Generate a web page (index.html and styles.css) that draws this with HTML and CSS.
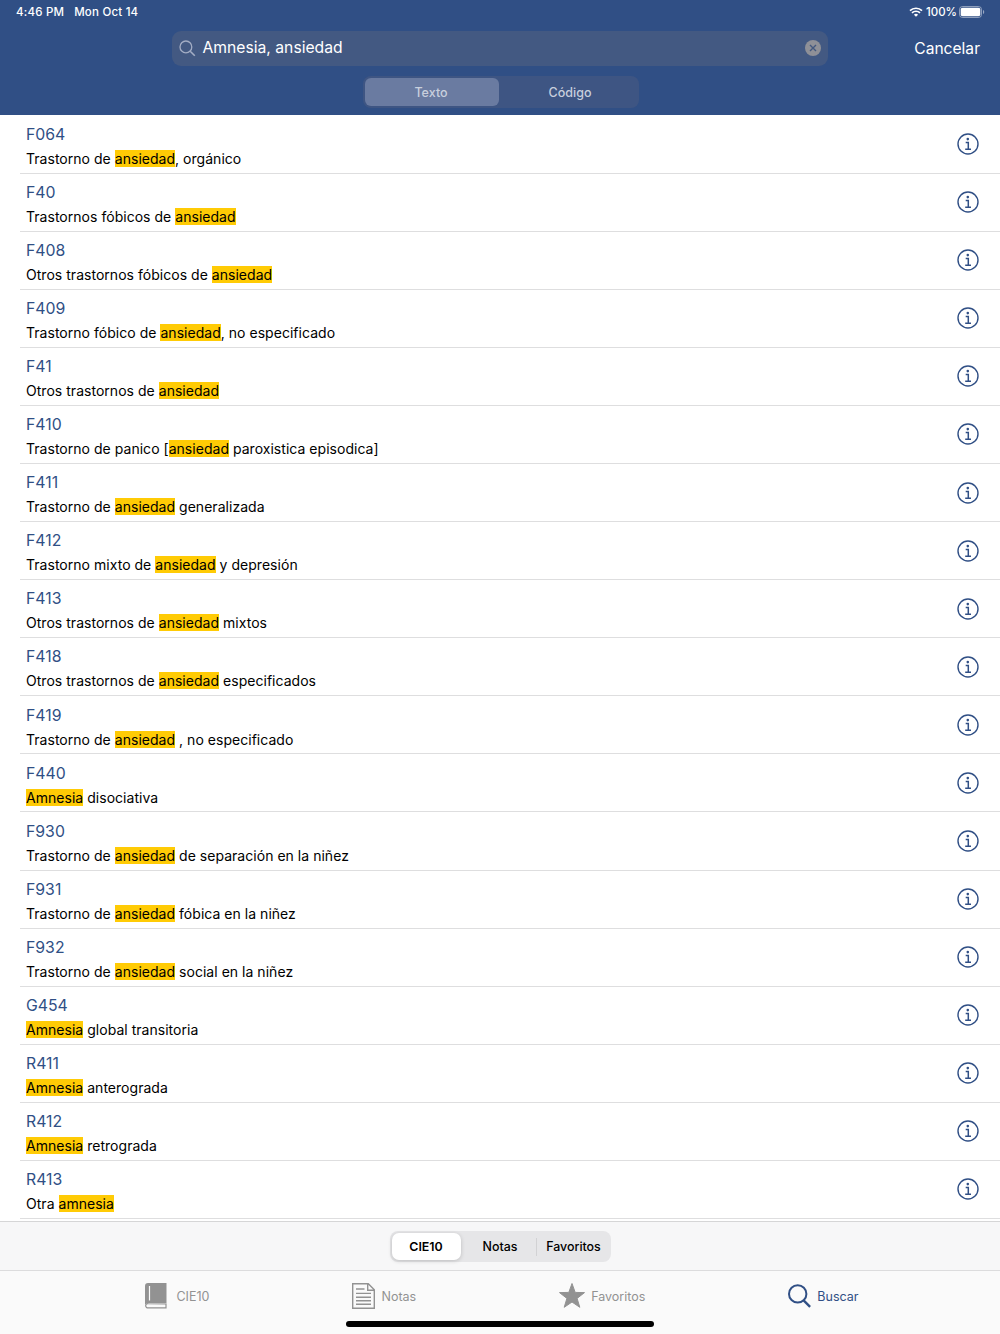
FILE: index.html
```
<!DOCTYPE html>
<html lang="es">

<head>
    <meta charset="UTF-8">
    <meta name="viewport" content="width=device-width, initial-scale=1.0">
    <title>CIE10 - Buscar</title>
    <link rel="stylesheet" href="styles.css">
</head>

<body>
    <svg class="sprite">
        <symbol id="info" viewBox="0 0 22 22">
            <circle cx="11" cy="11" r="10" fill="none" stroke="currentColor" stroke-width="1.4" />
            <circle cx="10.8" cy="6.1" r="1.3" fill="currentColor" />
            <path d="M8.7 9.4h2.6v6.7M8.2 16.2h5.8" fill="none" stroke="currentColor" stroke-width="1.5" />
        </symbol>
    </svg>

    <header class="header">
        <div class="status">
            <span class="time">4:46 PM</span>
            <span class="date">Mon Oct 14</span>
            <svg class="wifi" viewBox="0 0 14 10">
                <path d="M1 3.7a8.6 8.6 0 0 1 12 0M3 5.9a5.7 5.7 0 0 1 8 0" fill="none" stroke="#fff" stroke-width="1.7" />
                <path d="M7 9.8L4.9 7.7a3 3 0 0 1 4.2 0z" fill="#fff" />
            </svg>
            <span class="percent">100%</span>
            <svg class="battery" viewBox="0 0 26 12">
                <rect x=".5" y=".5" width="22" height="11" rx="3" fill="none" stroke="#fff" stroke-opacity=".45" />
                <rect x="1.7" y="1.8" width="19.6" height="8.4" rx="1.8" fill="#fff" />
                <path d="M24 4v4c.8-.3 1.2-1.1 1.2-2S24.8 4.3 24 4z" fill="#fff" fill-opacity=".5" />
            </svg>
        </div>
        <div class="search-row">
            <div class="search">
                <svg class="search-icon" viewBox="0 0 17 17">
                    <circle cx="6.9" cy="6.9" r="5.9" fill="none" stroke="currentColor" stroke-width="1.3" />
                    <path d="M11.2 11.2l4.6 4.5" stroke="currentColor" stroke-width="1.6" />
                </svg>
                <span class="query">Amnesia, ansiedad</span>
                <svg class="clear" viewBox="0 0 16 16">
                    <circle cx="8" cy="8" r="8" fill="#8f9097" />
                    <path d="M5 5l6 6M11 5l-6 6" stroke="#43587f" stroke-width="1.4" />
                </svg>
            </div>
            <span class="cancel">Cancelar</span>
        </div>
        <div class="scope">
            <span class="scope-item active">Texto</span>
            <span class="scope-item">Código</span>
        </div>
    </header>

    <ul class="list">
        <li class="row"><div class="entry"><div class="code">F064</div><div class="name">Trastorno de <mark>ansiedad</mark>, orgánico</div></div><svg class="info"><use href="#info" /></svg></li>
        <li class="row"><div class="entry"><div class="code">F40</div><div class="name">Trastornos fóbicos de <mark>ansiedad</mark></div></div><svg class="info"><use href="#info" /></svg></li>
        <li class="row"><div class="entry"><div class="code">F408</div><div class="name">Otros trastornos fóbicos de <mark>ansiedad</mark></div></div><svg class="info"><use href="#info" /></svg></li>
        <li class="row"><div class="entry"><div class="code">F409</div><div class="name">Trastorno fóbico de <mark>ansiedad</mark>, no especificado</div></div><svg class="info"><use href="#info" /></svg></li>
        <li class="row"><div class="entry"><div class="code">F41</div><div class="name">Otros trastornos de <mark>ansiedad</mark></div></div><svg class="info"><use href="#info" /></svg></li>
        <li class="row"><div class="entry"><div class="code">F410</div><div class="name">Trastorno de panico [<mark>ansiedad</mark> paroxistica episodica]</div></div><svg class="info"><use href="#info" /></svg></li>
        <li class="row"><div class="entry"><div class="code">F411</div><div class="name">Trastorno de <mark>ansiedad</mark> generalizada</div></div><svg class="info"><use href="#info" /></svg></li>
        <li class="row"><div class="entry"><div class="code">F412</div><div class="name">Trastorno mixto de <mark>ansiedad</mark> y depresión</div></div><svg class="info"><use href="#info" /></svg></li>
        <li class="row"><div class="entry"><div class="code">F413</div><div class="name">Otros trastornos de <mark>ansiedad</mark> mixtos</div></div><svg class="info"><use href="#info" /></svg></li>
        <li class="row"><div class="entry"><div class="code">F418</div><div class="name">Otros trastornos de <mark>ansiedad</mark> especificados</div></div><svg class="info"><use href="#info" /></svg></li>
        <li class="row"><div class="entry"><div class="code">F419</div><div class="name">Trastorno de <mark>ansiedad</mark> , no especificado</div></div><svg class="info"><use href="#info" /></svg></li>
        <li class="row"><div class="entry"><div class="code">F440</div><div class="name"><mark>Amnesia</mark> disociativa</div></div><svg class="info"><use href="#info" /></svg></li>
        <li class="row"><div class="entry"><div class="code">F930</div><div class="name">Trastorno de <mark>ansiedad</mark> de separación en la niñez</div></div><svg class="info"><use href="#info" /></svg></li>
        <li class="row"><div class="entry"><div class="code">F931</div><div class="name">Trastorno de <mark>ansiedad</mark> fóbica en la niñez</div></div><svg class="info"><use href="#info" /></svg></li>
        <li class="row"><div class="entry"><div class="code">F932</div><div class="name">Trastorno de <mark>ansiedad</mark> social en la niñez</div></div><svg class="info"><use href="#info" /></svg></li>
        <li class="row"><div class="entry"><div class="code">G454</div><div class="name"><mark>Amnesia</mark> global transitoria</div></div><svg class="info"><use href="#info" /></svg></li>
        <li class="row"><div class="entry"><div class="code">R411</div><div class="name"><mark>Amnesia</mark> anterograda</div></div><svg class="info"><use href="#info" /></svg></li>
        <li class="row"><div class="entry"><div class="code">R412</div><div class="name"><mark>Amnesia</mark> retrograda</div></div><svg class="info"><use href="#info" /></svg></li>
        <li class="row"><div class="entry"><div class="code">R413</div><div class="name">Otra <mark>amnesia</mark></div></div><svg class="info"><use href="#info" /></svg></li>
    </ul>

    <div class="toolbar">
        <div class="segments">
            <span class="segment active">CIE10</span>
            <span class="segment">Notas</span>
            <span class="segment divided">Favoritos</span>
        </div>
    </div>

    <nav class="tabs">
        <div class="tab-items">
            <a class="tab">
                <svg class="book" width="22" height="26" viewBox="0 0 22 26">
                    <path d="M3 0h18.5v20.3H3.5A3 3 0 0 0 0 22V3a3 3 0 0 1 3-3z" fill="currentColor" />
                    <path d="M4.5 3v14.5" stroke="#fafafa" stroke-width="1.2" />
                    <path d="M21 21v3.900H3.200a2.300 2.300 0 0 1-2.500-2.500 2.300 2.300 0 0 1 2.500-1.800z" fill="#fafafa" stroke="currentColor" stroke-width="1.2" />
                </svg>
                <span class="label">CIE10</span>
            </a>
            <a class="tab">
                <svg width="23" height="26" viewBox="0 0 23 26" fill="none" stroke="currentColor" stroke-width="1.4">
                    <path d="M.7.7h15.6l6 6v18.6H.7zM15.7.7v6.5h6.6" />
                    <path d="M4 6h8.500M4 10.400h15M4 14.200h15M4 17.700h15M4 21.200h15" />
                </svg>
                <span class="label">Notas</span>
            </a>
            <a class="tab">
                <svg class="star" width="26" height="25" viewBox="0 0 26 25">
                    <path d="M13 .5l3.200 8.900 9.300.2-7.400 5.800 2.700 8.900-7.800-5.300-7.800 5.300 2.700-8.900L.5 9.600l9.300-.2z" fill="currentColor" stroke="currentColor" stroke-linejoin="round" />
                </svg>
                <span class="label">Favoritos</span>
            </a>
            <a class="tab current">
                <svg width="23" height="24" viewBox="0 0 23 24" fill="none" stroke="currentColor">
                    <circle cx="9.7" cy="9.9" r="8.7" stroke-width="2" />
                    <path d="M15.6 16.3l6.5 6.500" stroke-width="2.4" />
                </svg>
                <span class="label">Buscar</span>
            </a>
        </div>
        <div class="home-bar"></div>
    </nav>
</body>

</html>
```

FILE: styles.css
```
* {
    margin: 0;
    padding: 0;
    box-sizing: border-box;
}

body {
    display: flex;
    flex-direction: column;
    width: 1000px;
    height: 1334px;
    background-color: #fff;
    font-family: Inter, "Liberation Sans", sans-serif;
    color: #000;
    overflow: hidden;
}

svg {
    display: block;
    flex: none;
}

.sprite {
    position: absolute;
    width: 0;
    height: 0;
}

/* cabecera azul */
.header {
    flex: none;
    height: 115px;
    background-color: #304f85;
    color: #fff;
}

.status {
    display: flex;
    align-items: center;
    height: 24px;
    padding: 0 15px 0 16px;
    font-size: 11.5px;
    line-height: 24px;
    font-weight: 500;
    letter-spacing: 0.2px;
}

.date {
    margin-left: 10px;
}

.wifi {
    width: 14px;
    height: 10px;
    margin-left: auto;
}

.percent {
    margin-left: 3px;
    letter-spacing: 0;
}

.battery {
    width: 26px;
    height: 12px;
    margin-left: 2px;
}

.search-row {
    display: flex;
    align-items: center;
    height: 35px;
    margin-top: 6.5px;
    padding: 0 20px 0 172px;
}

.search {
    display: flex;
    align-items: center;
    width: 656px;
    height: 35px;
    padding: 0 7px;
    border-radius: 9px;
    background-color: #435982;
}

.search-icon {
    width: 17px;
    height: 17px;
    color: #a3adc4;
}

.query {
    margin-left: 6.5px;
    padding-bottom: 2px;
    font-size: 15.7px;
}

.clear {
    width: 16px;
    height: 16px;
    margin-left: auto;
}

.cancel {
    margin-left: auto;
    font-size: 15.6px;
}

.scope {
    display: flex;
    width: 276px;
    height: 32px;
    margin: 10.5px 0 0 362.5px;
    padding: 2px;
    border-radius: 8px;
    background-color: #3e5583;
    font-size: 12.5px;
    font-weight: 500;
    line-height: 29px;
    text-align: center;
    color: #c8cfdd;
}

.scope-item {
    flex: 1;
    padding-left: 5px;
}

.scope-item.active {
    flex: none;
    width: 134px;
    height: 28px;
    padding: 0 1px 0 0;
    border-radius: 6px;
    background-color: #6a7ba1;
}

/* resultados */
.list {
    flex: none;
    height: 1106px;
    padding-top: 0.5px;
    list-style: none;
    overflow: hidden;
}

.row {
    display: flex;
    align-items: center;
    justify-content: space-between;
    height: 58.08px;
    margin-left: 20px;
    padding: 0 20.6px 0 6px;
    border-bottom: 1px solid #dededf;
}

.entry {
    padding-top: 4.5px;
}

.code {
    font-size: 15.8px;
    line-height: 20px;
    color: #304f85;
}

.name {
    margin-top: 5px;
    font-size: 14px;
    line-height: 18px;
    letter-spacing: 0.03px;
}

mark {
    background-color: #ffcb05;
    color: inherit;
}

.info {
    width: 22px;
    height: 22px;
    color: #304f85;
}

/* barra de segmentos */
.toolbar {
    flex: none;
    height: 50px;
    padding-top: 9px;
    border-top: 1px solid #d6d6d7;
    border-bottom: 1px solid #dcdcdd;
    background-color: #f7f7f8;
}

.segments {
    display: flex;
    width: 221px;
    height: 31px;
    margin: 0 auto;
    padding: 2px;
    border-radius: 8px;
    background-color: #e6e6e8;
    font-size: 12.4px;
    font-weight: 500;
    line-height: 27px;
    text-align: center;
}

.segment {
    flex: 1;
}

.segment.active {
    flex: none;
    width: 69px;
    margin-right: 4px;
    border-radius: 7px;
    background-color: #fff;
    box-shadow: 0 1px 4px rgba(0, 0, 0, 0.18);
    font-weight: 600;
}

.segment.divided {
    flex: none;
    width: 73px;
    padding-left: 3px;
    background: linear-gradient(#d2d2d4, #d2d2d4) 0 center / 1px 18px no-repeat;
}

/* pestañas */
.tabs {
    display: flex;
    flex: 1;
    flex-direction: column;
    align-items: center;
    background-color: #fafafa;
}

.tab-items {
    display: flex;
    justify-content: center;
    gap: 143px;
    height: 50px;
    padding-left: 4px;
}

.tab {
    display: flex;
    align-items: center;
    gap: 6px;
    color: #929292;
    font-size: 12.5px;
}

.book {
    margin-right: 3px;
}

.star {
    margin-bottom: 2px;
}

.tab.current {
    color: #304f85;
}

.home-bar {
    width: 308px;
    height: 6px;
    border-radius: 3px;
    background-color: #000;
}
```
